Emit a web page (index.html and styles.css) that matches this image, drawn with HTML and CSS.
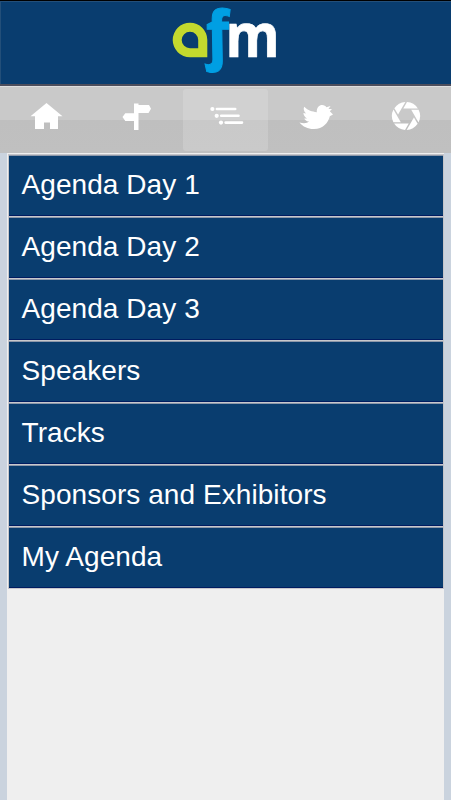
FILE: index.html
```html
<!DOCTYPE html>
<html lang="en">
<head>
<meta charset="utf-8">
<title>AFM</title>
<link rel="stylesheet" href="styles.css">
</head>
<body>
<header class="header">
  <svg class="logo" viewBox="0 0 110 83" role="img" aria-label="afm">
    <text class="logo-m" transform="translate(54.6 55.7) scale(.92 1)">m</text>
    <text class="logo-f" transform="translate(39.2 56) skewX(13)">f</text>
    <path class="leaf" fill-rule="evenodd" d="M19 21.7A17.2 17.2 0 1 0 19 56.3H36.3V38.8A17.2 17.2 0 0 0 19 21.7ZM19 30.7A8.3 8.3 0 1 0 19 47.3H27.2V39A8.2 8.2 0 0 0 19 30.7Z"/>
  </svg>
</header>
<nav class="tabs">
  <a class="tab"><svg viewBox="0 0 40 40"><path d="M20.5 7 36.5 20.3H32V33H24V26.5H18V33H9V20.3H4.5Z"/></svg></a>
  <a class="tab"><svg viewBox="0 0 40 40"><path d="M18 7.5H22.5V9H33L35 12.8 32.5 17H22.5V34H18V25H9.3L6.5 21 9.3 17.2H18Z"/></svg></a>
  <a class="tab active"><svg viewBox="0 0 40 40"><circle cx="6.4" cy="13" r="2.1"/><circle cx="10.7" cy="19.8" r="2.1"/><circle cx="15" cy="26.6" r="2.1"/><path class="lines" d="M10.9 13H29.2M15.2 19.8H32.5M19.6 26.6H36"/></svg></a>
  <a class="tab"><svg viewBox="0 0 40 40"><path d="M3.5 26.5C8 28 11 27.3 13 25.6 10 25.2 8.8 23.5 8.3 22.4H11C8.5 21 7.5 18.8 7.4 17L10 17.4C7.7 15.2 7.2 12.5 8.2 10.7 12.2 14.7 16 15.2 20.8 16.2 20.5 11.3 23.5 9 26 9 28.5 9 29.5 10 30.4 11.2L34.5 10 32.5 13 36 13 33.8 15.3 37 18.5 33.8 20.2C32.2 27 27 32.8 18 33 12.5 33.2 7 31 3.5 26.5Z"/></svg></a>
  <a class="tab"><svg viewBox="0 0 40 40"><path id="blade" d="M22.7 27.6 19 34A14 14 0 0 1 8.1 27.6Z"/><use href="#blade" transform="rotate(60 20 20)"/><use href="#blade" transform="rotate(120 20 20)"/><use href="#blade" transform="rotate(180 20 20)"/><use href="#blade" transform="rotate(240 20 20)"/><use href="#blade" transform="rotate(300 20 20)"/></svg></a>
</nav>
<main class="content">
  <ul class="menu">
    <li>Agenda Day 1</li>
    <li>Agenda Day 2</li>
    <li>Agenda Day 3</li>
    <li>Speakers</li>
    <li>Tracks</li>
    <li>Sponsors and Exhibitors</li>
    <li>My Agenda</li>
  </ul>
</main>
</body>
</html>
```
FILE: styles.css
```css
* { box-sizing: border-box; }
body {
  margin: 0;
  height: 800px;
  display: flex;
  flex-direction: column;
  overflow: hidden;
  background: #cad3de;
  font-family: "Liberation Sans", Arial, sans-serif;
}
.header {
  height: 86px;
  display: flex;
  justify-content: center;
  background: #093d6f;
  border-top: 1px solid #000;
  border-bottom: 2px solid #4d4e5c;
  box-shadow: inset 1px 1px #234f79;
}
.logo { width: 110px; height: 83px; flex: none; overflow: visible; }
.leaf { fill: #c3d92e; }
.logo-f { font: italic 700 64px "Open Sans", sans-serif; fill: #009fe3; stroke: #009fe3; stroke-width: 1; }
.logo-m { font: 700 60px "Open Sans", sans-serif; fill: #fff; stroke: #fff; stroke-width: .7; }
.tabs {
  height: 67px;
  display: flex;
  justify-content: space-between;
  padding: 2px 3px;
  background: linear-gradient(#c9c9c9 0, #c9c9c9 33px, #bfbfbf 33px, #c0c0c0 100%);
  border-top: 1px solid #dedede;
}
.tab {
  width: 85px;
  display: flex;
  justify-content: center;
  padding-top: 7px;
  border-radius: 3px;
}
.tab svg { width: 40px; height: 40px; fill: #fff; }
.active { background: rgba(255, 255, 255, .16); }
.lines { fill: none; stroke: #fff; stroke-width: 2.6; stroke-linecap: round; }
.content {
  flex: 1;
  margin: 0 7px;
  padding: 1px 0 0 1px;
  background: #efefef;
}
.menu {
  margin: 0;
  padding: 0;
  list-style: none;
  border: 1px solid #c4c4c8;
  border-bottom: 0;
}
.menu li {
  height: 62px;
  padding-left: 12.5px;
  background: #093d6f;
  border-top: 1px solid #8d98aa;
  border-bottom: 1px solid #c8c8cc;
  box-shadow: inset 0 -1px #001c60;
  color: #fff;
  font-size: 28px;
  line-height: 58px;
  letter-spacing: .07px;
}
```
